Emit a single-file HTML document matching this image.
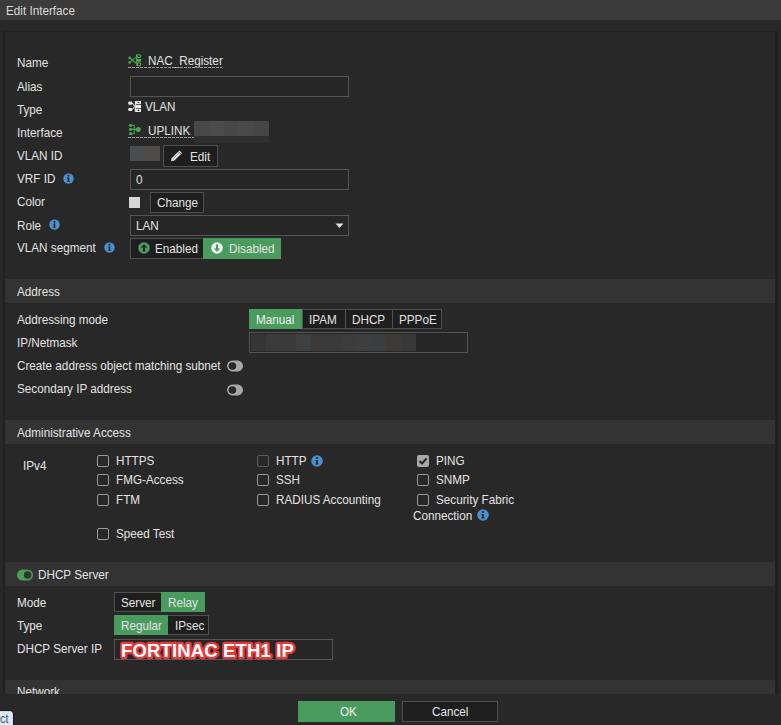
<!DOCTYPE html>
<html><head><meta charset="utf-8">
<style>
*{box-sizing:border-box;margin:0;padding:0}
html,body{width:781px;height:725px;overflow:hidden;background:#282828;font-family:"Liberation Sans",sans-serif;color:#e3e3e3}
.a{position:absolute}
.t{position:absolute;font-size:13px;line-height:15px;white-space:nowrap;transform:scaleX(.9);transform-origin:0 0}
#title{left:0;top:0;width:781px;height:20px;background:#3b3b3b}
#gap{left:0;top:20px;width:781px;height:11px;background:#282828}
#lb{left:3px;top:31px;width:2px;height:663px;background:#212121}
#tb{left:3px;top:31px;width:775px;height:1px;background:#222}
#rb{left:775px;top:31px;width:3px;height:663px;background:#202020}
#rr{left:778px;top:31px;width:3px;height:663px;background:#262626}
#panel{left:5px;top:31px;width:770px;height:663px;background:#282828}
.hdr{position:absolute;left:5px;width:770px;height:24px;background:#333}
.inp{position:absolute;border:1px solid #555;background:#262626}
.btn{position:absolute;border:1px solid #4f4f4f;background:#1e1e1e}
.seg{position:absolute;border:1px solid #4f4f4f;background:#1e1e1e}
.green{background:#4a9b5e}
.cb{position:absolute;width:12px;height:12px;border:1.5px solid #9a9a9a;border-radius:2px}
.info{position:absolute;width:11px;height:11px;border-radius:50%;background:#4b8cc8}
.dash{position:absolute;height:1px;background:repeating-linear-gradient(90deg,#9a9a9a 0 3px,transparent 3px 4px)}
.blk{position:absolute}
.tog{position:absolute;width:16px;height:11px;border-radius:6px}
</style></head><body>
<div id="title" class="a"></div>
<div class="t" style="left:6px;top:2.5px;color:#d8d8d8">Edit Interface</div>
<div id="gap" class="a"></div>
<div id="panel" class="a"></div>
<div id="lb" class="a"></div>
<div id="rb" class="a"></div>
<div id="rr" class="a"></div>
<div id="tb" class="a"></div>

<!-- labels top -->
<div class="t" style="left:17px;top:55px">Name</div>
<div class="t" style="left:17px;top:78.5px">Alias</div>
<div class="t" style="left:17px;top:102px">Type</div>
<div class="t" style="left:17px;top:125px">Interface</div>
<div class="t" style="left:17px;top:148px">VLAN ID</div>
<div class="t" style="left:17px;top:171px">VRF ID</div>
<div class="t" style="left:17px;top:194px">Color</div>
<div class="t" style="left:17px;top:217.5px">Role</div>
<div class="t" style="left:17px;top:240px">VLAN segment</div>


<!-- top values -->
<svg class="a" style="left:127px;top:53px" width="15" height="14" viewBox="0 0 15 14">
 <g fill="#46a452">
  <circle cx="2.7" cy="4.8" r="1.4"/><circle cx="2.7" cy="9.3" r="1.4"/>
 </g>
 <g fill="none" stroke="#46a452" stroke-width="1.1">
  <path d="M2.7 4.8 L9.3 10.2 M2.7 9.3 L9.3 3.8"/>
  <path d="M9.6 1.3 V12.7"/>
  <rect x="10.3" y="1.8" width="3.3" height="2.7" rx="1"/><rect x="10.3" y="9.9" width="3.3" height="2.7" rx="1"/>
 </g>
 <rect x="9.8" y="5.8" width="4.2" height="3" fill="#46a452"/>
</svg>
<div class="t" style="left:148px;top:52.5px">NAC_Register</div>
<div class="dash" style="left:128px;top:67px;width:94px"></div>
<div class="inp" style="left:130px;top:76px;width:219px;height:21px"></div>

<svg class="a" style="left:127px;top:100px" width="15" height="13" viewBox="0 0 15 13">
 <g fill="#e8e8e8">
  <rect x="1.3" y="1.5" width="3.9" height="3.2" rx="0.8"/><rect x="1.3" y="7.9" width="3.9" height="3.2" rx="0.8"/>
  <rect x="7.8" y="1" width="1.1" height="11"/>
  <rect x="8.9" y="1" width="5.1" height="3.3"/><rect x="8.9" y="5" width="5.1" height="3.3"/><rect x="8.9" y="8.9" width="5.1" height="3.1"/>
 </g>
 <path d="M4.8 3.2 Q7.2 3.6 7.3 6.3 Q7.2 9 4.8 9.4 M7.3 6.3 H7.9" fill="none" stroke="#e8e8e8" stroke-width="1"/>
 <g fill="#3a2830"><circle cx="11.5" cy="2.5" r="0.8"/><circle cx="11.5" cy="10.4" r="0.8"/></g>
</svg>
<div class="t" style="left:145px;top:99px">VLAN</div>

<svg class="a" style="left:128px;top:123px" width="14" height="13" viewBox="0 0 14 13">
 <g fill="#46a452">
  <circle cx="2.5" cy="2.3" r="1.6"/><circle cx="2.5" cy="6.4" r="1.6"/><circle cx="2.5" cy="10.7" r="1.6"/>
  <circle cx="10.2" cy="6.4" r="2.5"/>
 </g>
 <path d="M2.5 2.3 H6.2 V10.7 H2.5 M2.5 6.4 H10" fill="none" stroke="#46a452" stroke-width="1.1"/>
</svg>
<div class="t" style="left:148px;top:122.5px">UPLINK</div>
<div class="dash" style="left:128px;top:137px;width:66px"></div>
<div class="blk" style="left:194px;top:121px;width:75px;height:15px;background:linear-gradient(90deg,#484848 0 15px,#4b4b4b 15px 30px,#474747 30px 45px,#4a4a4a 45px 60px,#474545 60px 75px)"></div>
<div class="blk" style="left:194px;top:136px;width:75px;height:7px;background:#2f2f2f"></div>

<div class="blk" style="left:130px;top:146px;width:30px;height:15px;background:linear-gradient(90deg,#4a4c4e 0 15px,#4e4b49 15px 30px)"></div>
<div class="btn" style="left:163px;top:145px;width:55px;height:22px"></div>
<svg class="a" style="left:169px;top:149px" width="15" height="14" viewBox="0 0 15 14">
 <path d="M2 12 L2.6 9.3 L10.5 1.4 L13 3.9 L5.1 11.8 Z" fill="#e6e6e6"/>
 <path d="M9.3 2.6 L11.8 5.1" stroke="#1e1e1e" stroke-width="0.8"/><path d="M3.6 10.4 L10.6 3.4" stroke="#9aa4ae" stroke-width="0.9"/>
</svg>
<div class="t" style="left:190px;top:149px">Edit</div>

<svg class="info a" style="left:62.5px;top:172.5px;background:none" width="12" height="12" viewBox="0 0 12 12"><circle cx="6" cy="6" r="5.8" fill="#4b8fcf"/><circle cx="6" cy="3" r="1.1" fill="#282828"/><path d="M4.4 5 H6.9 V8.6 H7.6 V9.6 H4.4 V8.6 H5.1 V6 H4.4 Z" fill="#282828"/></svg>
<div class="inp" style="left:130px;top:169px;width:219px;height:21px"></div>
<div class="t" style="left:136px;top:171.5px">0</div>

<div class="blk" style="left:129px;top:197px;width:11px;height:11px;background:#d6d6d6"></div>
<div class="btn" style="left:150px;top:192px;width:54px;height:21px"></div>
<div class="t" style="left:157px;top:195px">Change</div>

<svg class="info a" style="left:48.5px;top:219px;background:none" width="12" height="12" viewBox="0 0 12 12"><circle cx="6" cy="6" r="5.8" fill="#4b8fcf"/><circle cx="6" cy="3" r="1.1" fill="#282828"/><path d="M4.4 5 H6.9 V8.6 H7.6 V9.6 H4.4 V8.6 H5.1 V6 H4.4 Z" fill="#282828"/></svg>
<div class="inp" style="left:130px;top:215px;width:219px;height:21px"></div>
<div class="t" style="left:136px;top:218px">LAN</div>
<svg class="a" style="left:335px;top:223px" width="9" height="6" viewBox="0 0 9 6"><path d="M0.5 0.5 H8.5 L4.5 5 Z" fill="#e0e0e0"/></svg>

<svg class="info a" style="left:103.5px;top:242px;background:none" width="12" height="12" viewBox="0 0 12 12"><circle cx="6" cy="6" r="5.8" fill="#4b8fcf"/><circle cx="6" cy="3" r="1.1" fill="#282828"/><path d="M4.4 5 H6.9 V8.6 H7.6 V9.6 H4.4 V8.6 H5.1 V6 H4.4 Z" fill="#282828"/></svg>
<div class="seg" style="left:130px;top:238px;width:151px;height:21px"></div>
<div class="blk green" style="left:203px;top:238px;width:78px;height:21px"></div>
<svg class="a" style="left:138px;top:242px" width="12" height="12" viewBox="0 0 12 12"><circle cx="6" cy="6" r="5.8" fill="#4a9b5e"/><path d="M6 2.3 L9.2 5.6 H7.1 V9.4 H4.9 V5.6 H2.8 Z" fill="#1e1e1e"/></svg>
<div class="t" style="left:155px;top:241px">Enabled</div>
<svg class="a" style="left:211px;top:242px" width="12" height="12" viewBox="0 0 12 12"><circle cx="6" cy="6" r="5.8" fill="#f2f2f2"/><path d="M6 9.7 L9.2 6.4 H7.1 V2.6 H4.9 V6.4 H2.8 Z" fill="#4a9b5e"/></svg>
<div class="t" style="left:229px;top:241px">Disabled</div>

<!-- Address -->
<div class="hdr" style="top:279px"></div>
<div class="t" style="left:17px;top:284px">Address</div>
<div class="t" style="left:17px;top:311.5px">Addressing mode</div>
<div class="t" style="left:17px;top:334.5px">IP/Netmask</div>
<div class="t" style="left:17px;top:357.5px">Create address object matching subnet</div>
<div class="t" style="left:17px;top:380.5px">Secondary IP address</div>


<div class="seg" style="left:249px;top:309px;width:193px;height:20px"></div>
<div class="blk green" style="left:249px;top:309px;width:53px;height:20px"></div>
<div class="blk" style="left:302px;top:310px;width:1px;height:18px;background:#4f4f4f"></div>
<div class="blk" style="left:345px;top:310px;width:1px;height:18px;background:#4f4f4f"></div>
<div class="blk" style="left:392px;top:310px;width:1px;height:18px;background:#4f4f4f"></div>
<div class="t" style="left:256px;top:312px;color:#f0f0f0">Manual</div>
<div class="t" style="left:309px;top:312px">IPAM</div>
<div class="t" style="left:352px;top:312px">DHCP</div>
<div class="t" style="left:399px;top:312px">PPPoE</div>
<div class="inp" style="left:249px;top:332px;width:219px;height:21px"></div>
<div class="blk" style="left:251px;top:334px;width:165px;height:17px;background:linear-gradient(90deg,#353535 0 15px,#3b3b3b 15px 30px,#3a3a3a 30px 45px,#3d3f41 45px 60px,#3b3a39 60px 75px,#3a3a3a 75px 90px,#3c3c3c 90px 105px,#3e3e3e 105px 120px,#3c3d3e 120px 135px,#3d3b3a 135px 150px,#383838 150px 165px)"></div>
<svg class="a" style="left:226px;top:360px" width="18" height="12" viewBox="0 0 18 12"><rect x="1" y="0.6" width="16" height="10.8" rx="5.4" fill="#a8a8a8"/><circle cx="6.4" cy="6" r="3.8" fill="#282828"/></svg>
<svg class="a" style="left:226px;top:383.5px" width="18" height="12" viewBox="0 0 18 12"><rect x="1" y="0.6" width="16" height="10.8" rx="5.4" fill="#a8a8a8"/><circle cx="6.4" cy="6" r="3.8" fill="#282828"/></svg>

<!-- Admin -->
<div class="hdr" style="top:420px"></div>
<div class="t" style="left:17px;top:424.5px">Administrative Access</div>
<div class="t" style="left:23px;top:458px">IPv4</div>

<div class="cb" style="left:97px;top:455px;border-color:#9a9a9a"></div>
<div class="t" style="left:116px;top:453px">HTTPS</div>
<div class="cb" style="left:97px;top:474px;border-color:#9a9a9a"></div>
<div class="t" style="left:116px;top:472px">FMG-Access</div>
<div class="cb" style="left:97px;top:493.5px;border-color:#9a9a9a"></div>
<div class="t" style="left:116px;top:491.5px">FTM</div>
<div class="cb" style="left:97px;top:528px;border-color:#9a9a9a"></div>
<div class="t" style="left:116px;top:525.5px">Speed Test</div>
<div class="cb" style="left:257px;top:455px;border-color:#5c5c5c"></div>
<div class="t" style="left:276px;top:453px">HTTP</div>
<div class="cb" style="left:257px;top:474px;border-color:#9a9a9a"></div>
<div class="t" style="left:276px;top:472px">SSH</div>
<div class="cb" style="left:257px;top:493.5px;border-color:#9a9a9a"></div>
<div class="t" style="left:276px;top:491.5px">RADIUS Accounting</div>
<svg class="a" style="left:417px;top:455px" width="12" height="12" viewBox="0 0 12 12"><rect x="0" y="0" width="12" height="12" rx="2" fill="#a8a8a8"/><path d="M2.5 6 L5 8.6 L9.6 3.4" fill="none" stroke="#262626" stroke-width="2"/></svg>
<div class="t" style="left:436px;top:453px">PING</div>
<div class="cb" style="left:417px;top:474px;border-color:#9a9a9a"></div>
<div class="t" style="left:436px;top:472px">SNMP</div>
<div class="cb" style="left:417px;top:493.5px;border-color:#9a9a9a"></div>
<div class="t" style="left:436px;top:491.5px">Security Fabric</div>
<div class="t" style="left:413px;top:507.5px">Connection</div>
<svg class="a" style="left:311px;top:454.5px" width="12" height="12" viewBox="0 0 12 12"><circle cx="6" cy="6" r="5.8" fill="#4b8fcf"/><circle cx="6" cy="3" r="1.1" fill="#282828"/><path d="M4.4 5 H6.9 V8.6 H7.6 V9.6 H4.4 V8.6 H5.1 V6 H4.4 Z" fill="#282828"/></svg>
<svg class="a" style="left:477px;top:509px" width="12" height="12" viewBox="0 0 12 12"><circle cx="6" cy="6" r="5.8" fill="#4b8fcf"/><circle cx="6" cy="3" r="1.1" fill="#282828"/><path d="M4.4 5 H6.9 V8.6 H7.6 V9.6 H4.4 V8.6 H5.1 V6 H4.4 Z" fill="#282828"/></svg>

<!-- DHCP -->
<div class="hdr" style="top:562px"></div>
<div class="t" style="left:38px;top:566.5px">DHCP Server</div>
<div class="t" style="left:17px;top:594.5px">Mode</div>
<div class="t" style="left:17px;top:617.5px">Type</div>
<div class="t" style="left:17px;top:640.5px">DHCP Server IP</div>


<svg class="a" style="left:16px;top:568.5px" width="18" height="12" viewBox="0 0 18 12"><rect x="1" y="0.5" width="16" height="11" rx="5.5" fill="#4a9e58"/><circle cx="11.6" cy="6" r="3.8" fill="#333"/></svg>
<div class="seg" style="left:114px;top:592px;width:91px;height:20px"></div>
<div class="blk green" style="left:161px;top:592px;width:44px;height:20px"></div>
<div class="t" style="left:121px;top:594.5px">Server</div>
<div class="t" style="left:168px;top:594.5px">Relay</div>
<div class="seg" style="left:114px;top:615px;width:95px;height:20px"></div>
<div class="blk green" style="left:114px;top:615px;width:54px;height:20px"></div>
<div class="t" style="left:121px;top:617.5px">Regular</div>
<div class="t" style="left:175px;top:617.5px">IPsec</div>
<div class="inp" style="left:114px;top:639px;width:219px;height:21px"></div>
<svg class="a" style="left:110px;top:636px" width="200" height="26" viewBox="0 0 200 26"><text x="11" y="20.5" font-family="Liberation Sans" font-size="18.5" font-weight="bold" letter-spacing="0.15" fill="#fff" stroke="#e8383a" stroke-width="4.4" stroke-linejoin="round" paint-order="stroke">FORTINAC ETH1 IP</text></svg>

<!-- Network -->
<div class="hdr" style="top:680px;height:14px;overflow:hidden"><div class="t" style="left:12px;top:3.5px">Network</div></div>

<!-- footer -->
<div class="a" style="left:0;top:694px;width:781px;height:31px;background:#282828"></div>
<div class="a green" style="left:298px;top:701px;width:97px;height:21px"></div>
<div class="btn" style="left:402px;top:701px;width:96px;height:21px"></div>
<div class="t" style="left:340px;top:704px;color:#f2f2f2">OK</div>
<div class="t" style="left:432px;top:704px">Cancel</div>
<div class="a" style="left:-6px;top:710.5px;width:19px;height:17px;border-radius:3px;background:#dfe8f7;border:1px solid #c9d6ea;box-shadow:0 0 0 1px #1c1c1c"></div>
<div class="t" style="left:-0.5px;top:713px;color:#4a4f66;font-size:12px;line-height:13px">ct</div>
</body></html>
